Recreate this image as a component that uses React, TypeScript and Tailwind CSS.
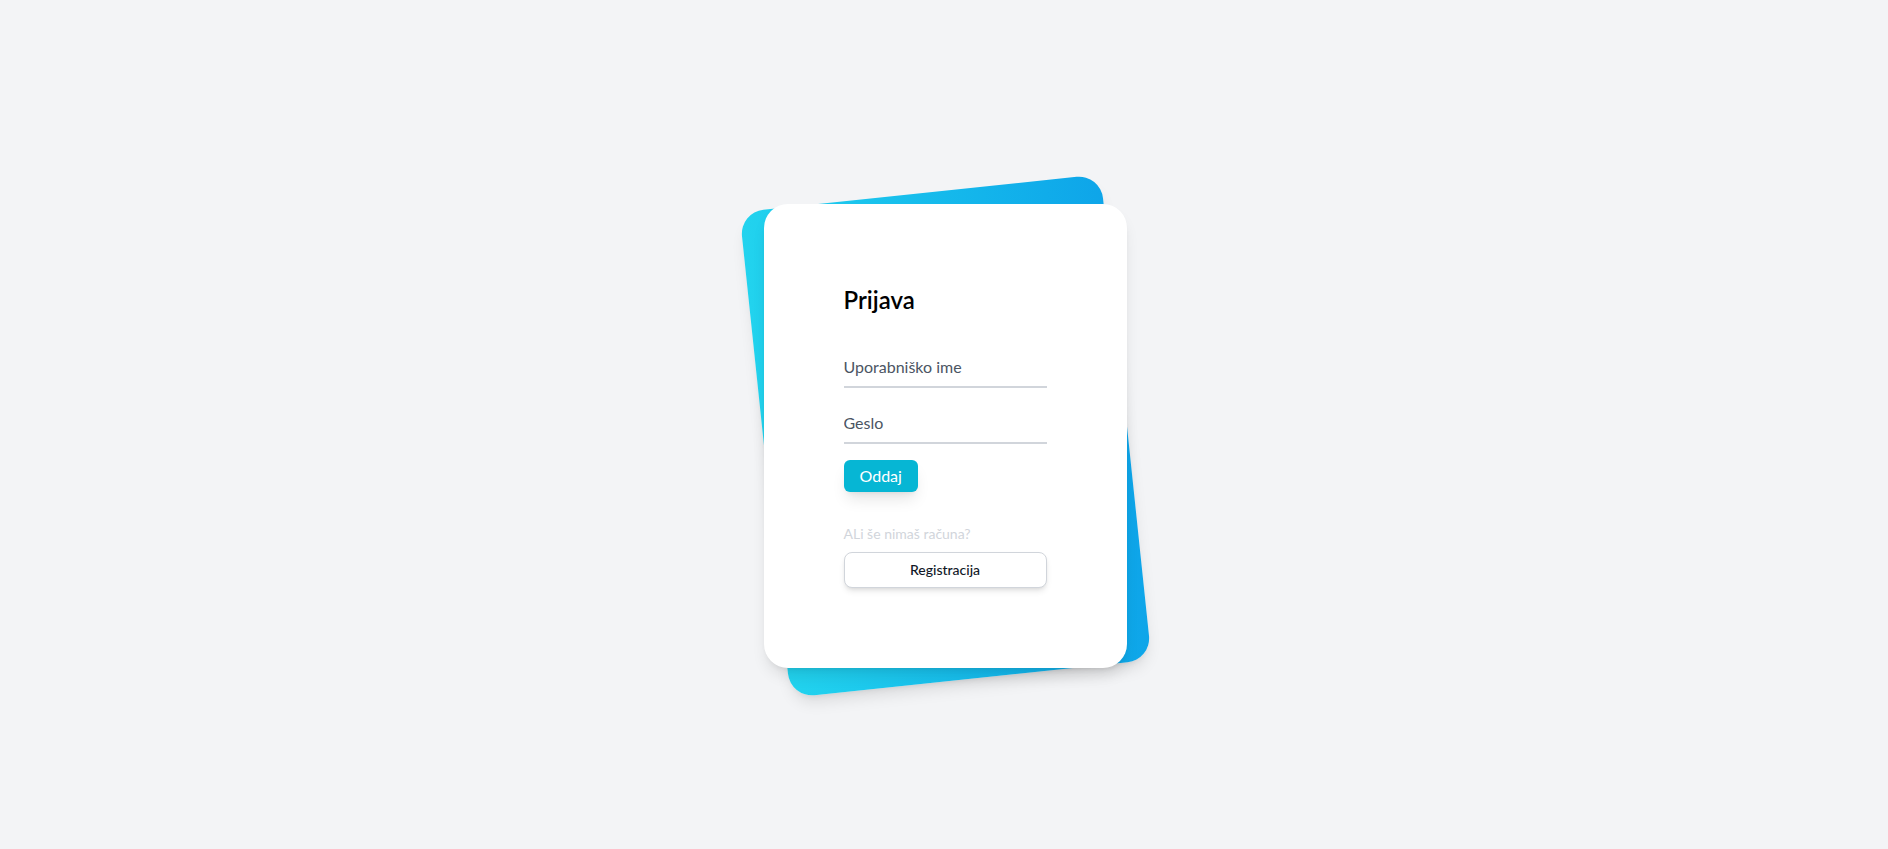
import React from "react";

export default function App() {
  return (
    <div
      className="min-h-screen bg-[#f3f4f6] flex flex-col justify-center pt-[70px] pb-12"
      style={{ fontFamily: "Lato, 'Noto Sans', sans-serif" }}
    >
      <div className="relative py-3 mx-auto w-[363px] translate-x-[1px]">
        <div className="absolute inset-0 bg-gradient-to-r from-[#22d3ee] to-[#0ea5e9] shadow-lg -rotate-6 rounded-3xl" />
        <div className="relative bg-white shadow-lg rounded-3xl p-20">
          <h1 className="text-2xl leading-8 font-semibold text-black">Prijava</h1>
          <div className="py-8 space-y-4 text-base">
            <div>
              <input
                type="text"
                placeholder="Uporabniško ime"
                className="block h-10 w-full border-b-2 border-[#d1d5db] text-[#111827] placeholder:text-[#4b5563] focus:outline-none"
              />
            </div>
            <div>
              <input
                type="password"
                placeholder="Geslo"
                className="block h-10 w-full border-b-2 border-[#d1d5db] text-[#111827] placeholder:text-[#4b5563] focus:outline-none"
              />
            </div>
            <div>
              <button className="bg-[#06b6d4] text-white text-base leading-6 rounded-md px-4 py-1 shadow-lg">
                Oddaj
              </button>
            </div>
          </div>
          <p className="text-sm leading-5 text-[#d1d5db]">ALi še nimaš računa?</p>
          <button className="mt-2 w-full h-9 border border-[#d1d5db] rounded-lg shadow-md bg-white text-sm font-medium text-[#111827]">
            Registracija
          </button>
        </div>
      </div>
    </div>
  );
}
